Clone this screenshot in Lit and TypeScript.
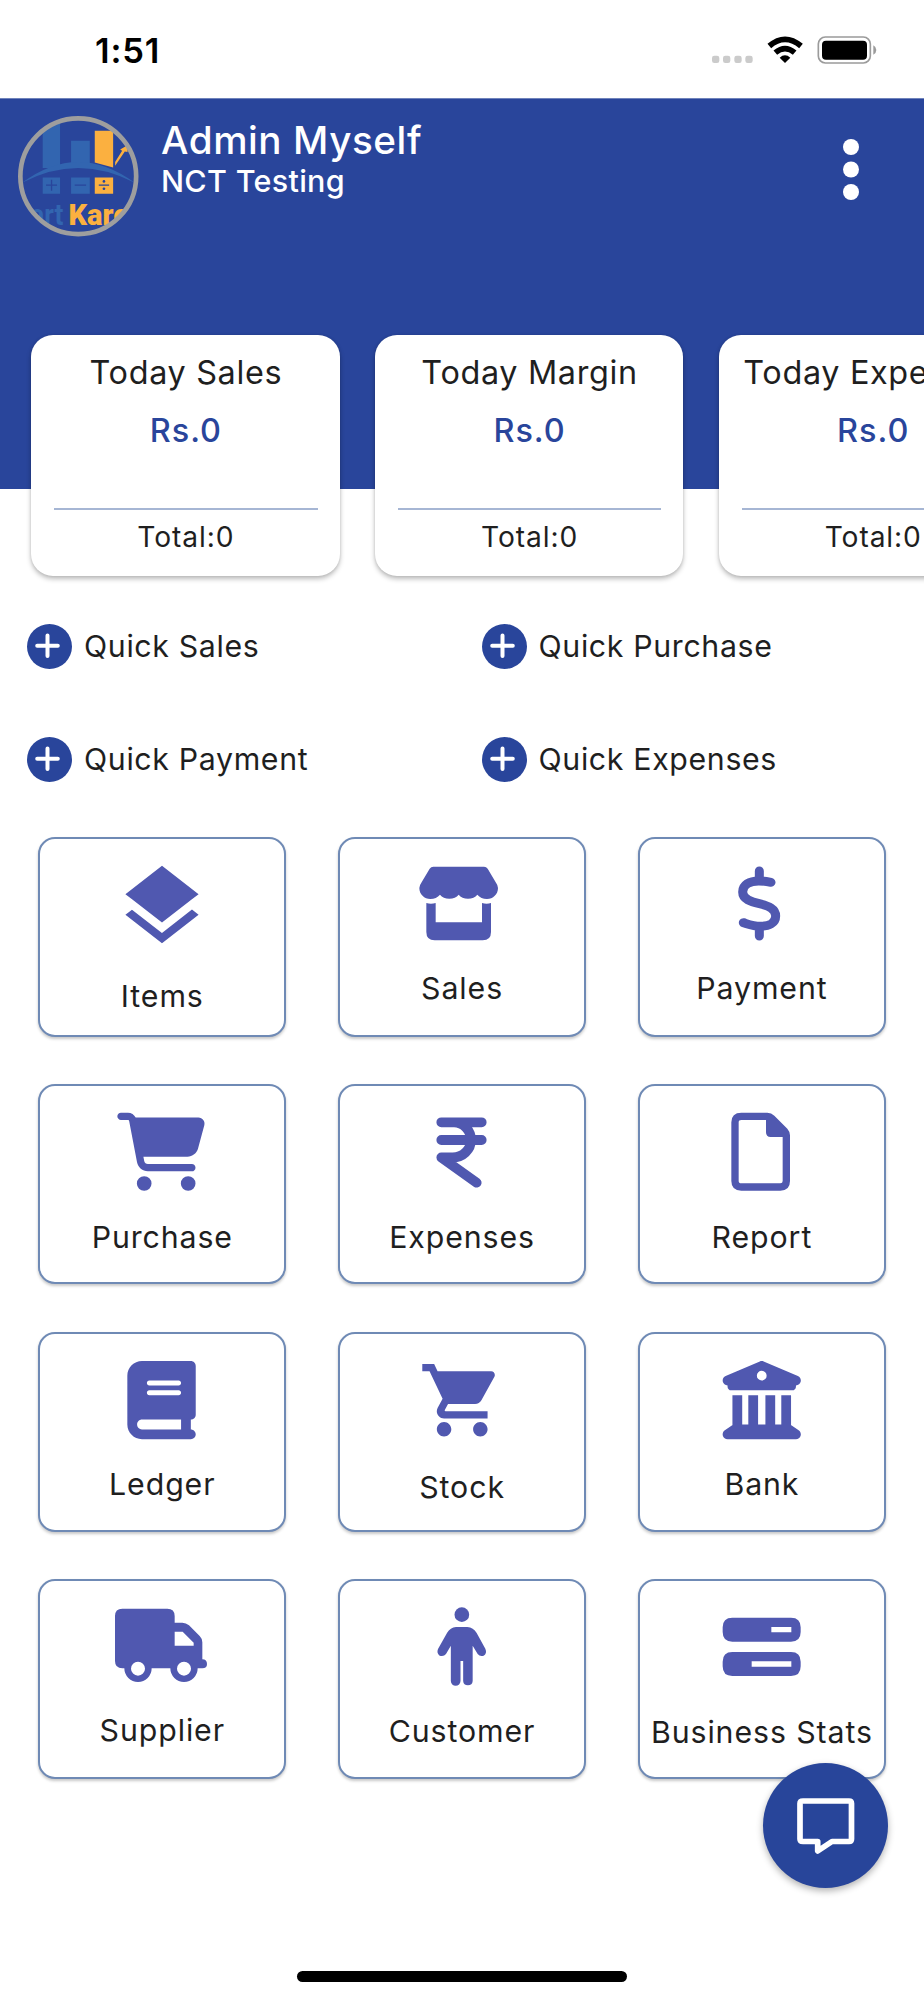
import { LitElement, html, css, svg, TemplateResult } from "lit";
import { customElement, property } from "lit/decorators.js";

interface Tile {
  label: string;
  // top-left corner of the icon's drawing area
  origin: [number, number];
  // space between the icon area and the label
  drop: number;
  icon: TemplateResult;
}

const tiles: Tile[] = [
  {
    label: "Items",
    origin: [115, 52],
    drop: 19,
    icon: svg`<path transform="translate(340.6 113.6) scale(12.2)" d="M11.99 18.54l-7.37-5.73L3 14.07l9 7 9-7-1.63-1.27-7.38 5.74zM12 16l7.36-5.73L21 9l-9-7-9 7 1.63 1.27L12 16z"/>`,
  },
  {
    label: "Sales",
    origin: [-216, -53],
    drop: 11,
    icon: svg`<path d="M72 36H222Q229 36 233 42L258 84Q264 92 264 100C264 119 249 133 231 133C219 133 209 128 202 120C196 128 186 132 174 132C162 132 152 128 146 120C140 128 130 132 118 132C106 132 96 128 90 120C83 128 73 133 61 133C43 133 28 119 28 100Q28 92 34 84L59 42Q63 36 70 36Z"/><path d="M49 145Q63 149 77 145V203H216V145Q230 149 243 145V232Q243 257 218 257H74Q49 257 49 232Z"/>`,
  },
  {
    label: "Payment",
    origin: [528, 52],
    drop: 11,
    icon: svg`<path class="line" stroke-width="27" d="M892 154V184M892 320V349M927 188C908 184 900 184 890 184C862 184 842 196 842 217C842 239 866 246 892 252C920 259 941 267 941 289C941 310 921 320 895 320C875 320 860 314 844 309"/>`,
  },
  {
    label: "Purchase",
    origin: [115, 793],
    drop: 12.5,
    icon: svg`<path transform="translate(353 879) scale(.458)" d="M0 24C0 10.7 10.7 0 24 0H69.5c22 0 41.5 12.8 50.6 32h411c26.3 0 45.5 25 38.6 50.4l-41 152.3c-8.5 31.4-37 53.3-69.5 53.3H170.7l5.4 28.5c2.2 11.3 12.1 19.5 23.6 19.5H488c13.3 0 24 10.7 24 24s-10.7 24-24 24H199.7c-34.6 0-64.3-24.6-70.7-58.5L77.4 54.5c-.7-3.8-4-6.5-7.9-6.5H24C10.7 48 0 37.3 0 24zM128 464a48 48 0 1 1 96 0 48 48 0 1 1 -96 0zm336-48a48 48 0 1 1 0 96 48 48 0 1 1 0-96z"/>`,
  },
  {
    label: "Expenses",
    origin: [-216, 688],
    drop: 13,
    icon: svg`<path class="line" stroke-width="29.5" d="M94 803H215M94 856H215M94 803H132C160 803 183 827 183 856C183 885 158 908.5 128 908.5H94L200 984"/>`,
  },
  {
    label: "Report",
    origin: [528, 793],
    drop: 12.5,
    icon: svg`<path fill-rule="evenodd" d="M838 879H916Q928 879 937 888L976 927Q984 936 984 947V1084Q984 1113 955 1113H838Q808 1113 808 1084V908Q808 879 838 879ZM838 901Q830 901 830 908V1084Q830 1091 838 1091H955Q962 1091 962 1084V952H926Q912 952 912 938V901Z"/>`,
  },
  {
    label: "Ledger",
    origin: [115, 66],
    drop: 12,
    icon: svg`<path transform="translate(383 153) scale(.458)" d="M96 0C43 0 0 43 0 96V416c0 53 43 96 96 96H384h32c17.7 0 32-14.3 32-32s-14.3-32-32-32V384c17.7 0 32-14.3 32-32V32c0-17.7-14.3-32-32-32H384 96zm0 384H352v64H96c-17.7 0-32-14.3-32-32s14.3-32 32-32zm32-240c0-8.8 7.2-16 16-16H336c8.8 0 16 7.2 16 16s-7.2 16-16 16H144c-8.8 0-16-7.2-16-16zm16 48H336c8.8 0 16 7.2 16 16s-7.2 16-16 16H144c-8.8 0-16-7.2-16-16s7.2-16 16-16z"/>`,
  },
  {
    label: "Stock",
    origin: [-216, -54],
    drop: 15,
    icon: svg`<path transform="translate(26 20.5) scale(10.88)" d="M7 18c-1.1 0-1.99.9-1.99 2S5.9 22 7 22s2-.9 2-2-.9-2-2-2zM1 2v2h2l3.6 7.59-1.35 2.45c-.16.28-.25.61-.25.96 0 1.1.9 2 2 2h12v-2H7.42c-.14 0-.25-.11-.25-.25l.03-.12.9-1.63h7.45c.75 0 1.41-.41 1.75-1.03l3.58-6.49c.08-.14.12-.31.12-.48 0-.55-.45-1-1-1H5.21l-.94-2H1zm16 16c-1.1 0-1.99.9-1.99 2s.89 2 1.99 2 2-.9 2-2-.9-2-2-2z"/>`,
  },
  {
    label: "Bank",
    origin: [528, 66],
    drop: 12,
    icon: svg`<path transform="translate(782 153) scale(.458)" d="M243.4 2.6l-224 96c-14 6-21.8 21-18.7 35.8S16.8 160 32 160v8c0 13.3 10.7 24 24 24H456c13.3 0 24-10.7 24-24v-8c15.2 0 28.3-10.7 31.3-25.6s-4.8-29.9-18.7-35.8l-224-96c-8-3.4-17.2-3.4-25.2 0zM128 224H64V420.3c-.6 .3-1.2 .7-1.8 1.1l-48 32c-11.7 7.8-17 22.4-12.9 35.9S17.9 512 32 512H480c14.1 0 26.5-9.2 30.6-22.7s-1.1-28.1-12.9-35.9l-48-32c-.6-.4-1.2-.7-1.8-1.1V224H384V416H344V224H280V416H232V224H168V416H128V224zM256 64a32 32 0 1 1 0 64 32 32 0 1 1 0-64z"/>`,
  },
  {
    label: "Supplier",
    origin: [115, 807],
    drop: 11,
    icon: svg`<path fill-rule="evenodd" d="M368 896H503Q525 896 525 918V938H548Q559 938 568 946L600 978Q608 986 608 997V1048Q622 1048 622 1062Q622 1075 608 1075H594A41 41 0 0 1 512 1075H456A41 41 0 0 1 374 1075H368Q346 1075 346 1053V918Q346 896 368 896ZM525 965V1007H582V998L549 965ZM394 1076A21 21 0 1 0 436 1076A21 21 0 1 0 394 1076ZM532 1076A21 21 0 1 0 574 1076A21 21 0 1 0 532 1076Z"/>`,
  },
  {
    label: "Customer",
    origin: [-216, 688],
    drop: 12,
    icon: svg`<circle cx="155.5" cy="795" r="22"/><path d="M138 832H172Q190 834 200 850L226 897Q232 911 221 918Q210 922 203 913L188 888V994A14.3 14.3 0 0 1 159.5 994V934H151.5V994A14.3 14.3 0 0 1 122.5 994V888L108 913Q101 922 89 918Q79 910 84 898L111 850Q121 834 138 832Z"/>`,
  },
  {
    label: "Business Stats",
    origin: [528, 807],
    drop: 12.5,
    icon: svg`<path fill-rule="evenodd" d="M811 923H987Q1016 923 1016 952V966Q1016 995 987 995H811Q782 995 782 966V952Q782 923 811 923ZM928 951V967H988V951ZM811 1026H987Q1016 1026 1016 1055V1069Q1016 1098 987 1098H811Q782 1098 782 1069V1055Q782 1026 811 1026ZM869 1054V1070H988V1054Z"/>`,
  },
];

@customElement("status-bar")
export class StatusBar extends LitElement {
  static styles = css`
    :host {
      display: flex;
      height: 98px;
      box-sizing: border-box;
      padding: 30px 45.5px 0 95px;
      justify-content: space-between;
      align-items: flex-start;
    }
    .time {
      font-size: 34.5px;
      line-height: 42px;
      font-weight: 600;
      letter-spacing: 0.8px;
      color: #000;
    }
    .signals {
      width: 168px;
      height: 36px;
      margin-top: 3px;
    }
  `;
  render() {
    return html`
      <div class="time">1:51</div>
      <svg class="signals" viewBox="747 100 504 108">
        <g fill="#cbcbcb">
          <rect x="750" y="168" width="22" height="22" rx="7" />
          <rect x="783" y="168" width="22" height="22" rx="7" />
          <rect x="817" y="168" width="22" height="22" rx="7" />
          <rect x="850" y="168" width="22" height="22" rx="7" />
        </g>
        <path fill="none" stroke="#000" stroke-width="17" d="M922 139Q969 99 1017 139" />
        <path fill="none" stroke="#000" stroke-width="17" d="M940 159Q969 135 998 159" />
        <path d="M953 174Q969 160 985 174L969 190Z" />
        <rect x="1069" y="112" width="156" height="78" rx="21" fill="none" stroke="#9b9b9b" stroke-width="5" />
        <rect x="1080" y="123" width="135" height="57" rx="12" />
        <path fill="#9b9b9b" d="M1234 137Q1243 142 1243 151Q1243 160 1234 165Z" />
      </svg>
    `;
  }
}

@customElement("summary-card")
export class SummaryCard extends LitElement {
  @property() heading = "";
  static styles = css`
    :host {
      display: flex;
      flex-direction: column;
      align-items: center;
      flex: none;
      width: 308.4px;
      height: 241.3px;
      box-sizing: border-box;
      padding: 18px 22px 0 23px;
      border-radius: 22px;
      background: #fff;
      box-shadow: 0 3px 5px rgba(0, 0, 0, 0.26), 0 0 3px rgba(0, 0, 0, 0.1);
      white-space: nowrap;
    }
    .heading {
      font-size: 32.4px;
      line-height: 40px;
      letter-spacing: 0.65px;
      color: #1f1f1f;
    }
    .amount {
      margin-top: 18px;
      font-size: 32.4px;
      line-height: 40px;
      letter-spacing: 1px;
      font-weight: 500;
      color: #29459b;
    }
    .rule {
      align-self: stretch;
      height: 2px;
      margin-top: 57px;
      background: #a6b6d4;
    }
    .total {
      margin-top: 9px;
      font-size: 28.2px;
      line-height: 36px;
      letter-spacing: 0.9px;
      color: #1f1f1f;
    }
  `;
  render() {
    return html`
      <div class="heading">${this.heading}</div>
      <div class="amount">Rs.0</div>
      <div class="rule"></div>
      <div class="total">Total:0</div>
    `;
  }
}

@customElement("app-root")
export class AppRoot extends LitElement {
  static styles = css`
    :host {
      display: block;
      position: relative;
      width: 924px;
      height: 2000px;
      overflow: hidden;
      background: #fff;
      font-family: Inter, Roboto, sans-serif;
      color: #1f1f1f;
    }
    .header {
      display: flex;
      height: 391px;
      box-sizing: border-box;
      padding: 17px 65px 0 18px;
      align-items: flex-start;
      background: #29459b;
      border-top: 1px solid #6f83bb;
      color: #fff;
    }
    .logo {
      flex: none;
      width: 120.5px;
      height: 120.5px;
    }
    .who {
      flex: 1;
      padding: 2px 0 0 22.5px;
      white-space: nowrap;
    }
    .name {
      font-size: 38.7px;
      line-height: 44px;
      font-weight: 500;
      letter-spacing: 0.55px;
    }
    .org {
      font-size: 30.5px;
      line-height: 38px;
      font-weight: 500;
      letter-spacing: 0.3px;
    }
    .menu {
      width: 16px;
      height: 61px;
      margin-top: 23px;
      fill: #fff;
      flex: none;
    }
    .cards {
      display: flex;
      gap: 35.3px;
      margin: -154.3px 0 0 31.2px;
    }
    .quick {
      display: grid;
      grid-template-columns: 454.5px 1fr;
      row-gap: 68.4px;
      margin: 47.5px 0 0 27px;
    }
    .action {
      display: flex;
      align-items: center;
      height: 45.3px;
      gap: 12px;
      font-size: 30.3px;
      line-height: 36px;
      letter-spacing: 0.65px;
    }
    .action span {
      padding-bottom: 1px;
    }
    .plus {
      width: 45px;
      height: 45px;
      flex: none;
    }
    .tiles {
      display: grid;
      grid-template-columns: repeat(3, 248px);
      grid-auto-rows: 200px;
      column-gap: 51.8px;
      row-gap: 47.35px;
      margin: 54.6px 0 0 38.3px;
    }
    .tile {
      display: flex;
      flex-direction: column;
      align-items: center;
      box-sizing: border-box;
      border: 2px solid #6f8ab5;
      border-radius: 17px;
      background: #fff;
      box-shadow: 0 2px 3px rgba(0, 0, 0, 0.22);
      white-space: nowrap;
    }
    .icon {
      width: 244px;
      height: 120px;
      flex: none;
      fill: #5058b0;
    }
    .icon .line {
      fill: none;
      stroke: #5058b0;
      stroke-linecap: round;
      stroke-linejoin: round;
    }
    .label {
      font-size: 30.3px;
      line-height: 36px;
      letter-spacing: 0.9px;
    }
    .fab {
      position: absolute;
      left: 763px;
      top: 1763px;
      width: 125px;
      height: 125px;
      border-radius: 50%;
      background: #28459a;
      box-shadow: 0 3px 7px rgba(0, 0, 0, 0.3);
    }
    .home {
      position: absolute;
      left: 297px;
      bottom: 18px;
      width: 330px;
      height: 11px;
      border-radius: 6px;
      background: #000;
    }
  `;

  private action(label: string) {
    return html`<div class="action">
      <svg class="plus" viewBox="0 0 45 45">
        <circle cx="22.5" cy="22.5" r="22.5" fill="#29459b" />
        <path d="M10.2 21.800H30.8M20.500 11.500V32.100" stroke="#fff" stroke-width="4" stroke-linecap="round" />
      </svg>
      <span>${label}</span>
    </div>`;
  }

  render() {
    return html`
      <status-bar></status-bar>
      <div class="header">
        <svg class="logo" viewBox="24 34 361 361">
          <defs>
            <clipPath id="disc"><circle cx="204.5" cy="214.5" r="170" /></clipPath>
          </defs>
          <g clip-path="url(#disc)">
            <g fill="#3265b0">
              <path d="M98 34H150V190H98ZM183 108H239V180H183Z" />
              <path d="M36 234Q204 109 374 234Q204 145 36 234Z" />
              <path d="M98 218H150V267H98ZM183 218H239V267H183Z" />
            </g>
            <g fill="#fbb040">
              <path d="M254 78H309V188L254 173Z" />
              <path d="M315 183V172L336 138L330 134L352 122V142L344 140Z" />
              <path d="M254 218H309V267H254Z" />
            </g>
            <path d="M108 241H141M124.500 225V258M194 241H228M266 241H297" stroke="#29459b" stroke-width="4" />
            <circle cx="281.5" cy="230" r="4" fill="#29459b" />
            <circle cx="281.5" cy="252" r="4" fill="#29459b" />
            <text x="160" y="362" text-anchor="end" textLength="215" lengthAdjust="spacingAndGlyphs" font-family="Roboto" font-weight="700" font-size="88" fill="#3265b0">Smart</text>
            <text x="175" y="362" textLength="182" lengthAdjust="spacingAndGlyphs" font-family="Roboto" font-weight="900" font-size="91" fill="#fbb040">Kare</text>
          </g>
          <circle cx="204.5" cy="214.5" r="173.5" fill="none" stroke="#9e9e9e" stroke-width="14" />
        </svg>
        <div class="who">
          <div class="name">Admin Myself</div>
          <div class="org">NCT Testing</div>
        </div>
        <svg class="menu" viewBox="0 0 16 61">
          <circle cx="8" cy="8" r="8" />
          <circle cx="8" cy="30.5" r="8" />
          <circle cx="8" cy="53" r="8" />
        </svg>
      </div>
      <div class="cards">
        <summary-card heading="Today Sales"></summary-card>
        <summary-card heading="Today Margin"></summary-card>
        <summary-card heading="Today Expenses"></summary-card>
      </div>
      <div class="quick">
        ${["Quick Sales", "Quick Purchase", "Quick Payment", "Quick Expenses"].map((l) => this.action(l))}
      </div>
      <div class="tiles">
        ${tiles.map(
          (t) => html`<div class="tile">
            <svg class="icon" viewBox="${t.origin[0] + 6} ${t.origin[1] + 6} 732 360">${t.icon}</svg>
            <div class="label" style="margin-top:${t.drop}px">${t.label}</div>
          </div>`
        )}
      </div>
      <svg class="fab" viewBox="0 0 125 125">
        <path fill="none" stroke="#fff" stroke-width="5.7" stroke-linejoin="round" d="M40 38H86Q88.5 38 88.5 40.5V76Q88.5 78.5 86 78.5H69L54.7 88V78.5H40Q37 78.5 37 76V40.5Q37 38 40 38Z" />
      </svg>
      <div class="home"></div>
    `;
  }
}
